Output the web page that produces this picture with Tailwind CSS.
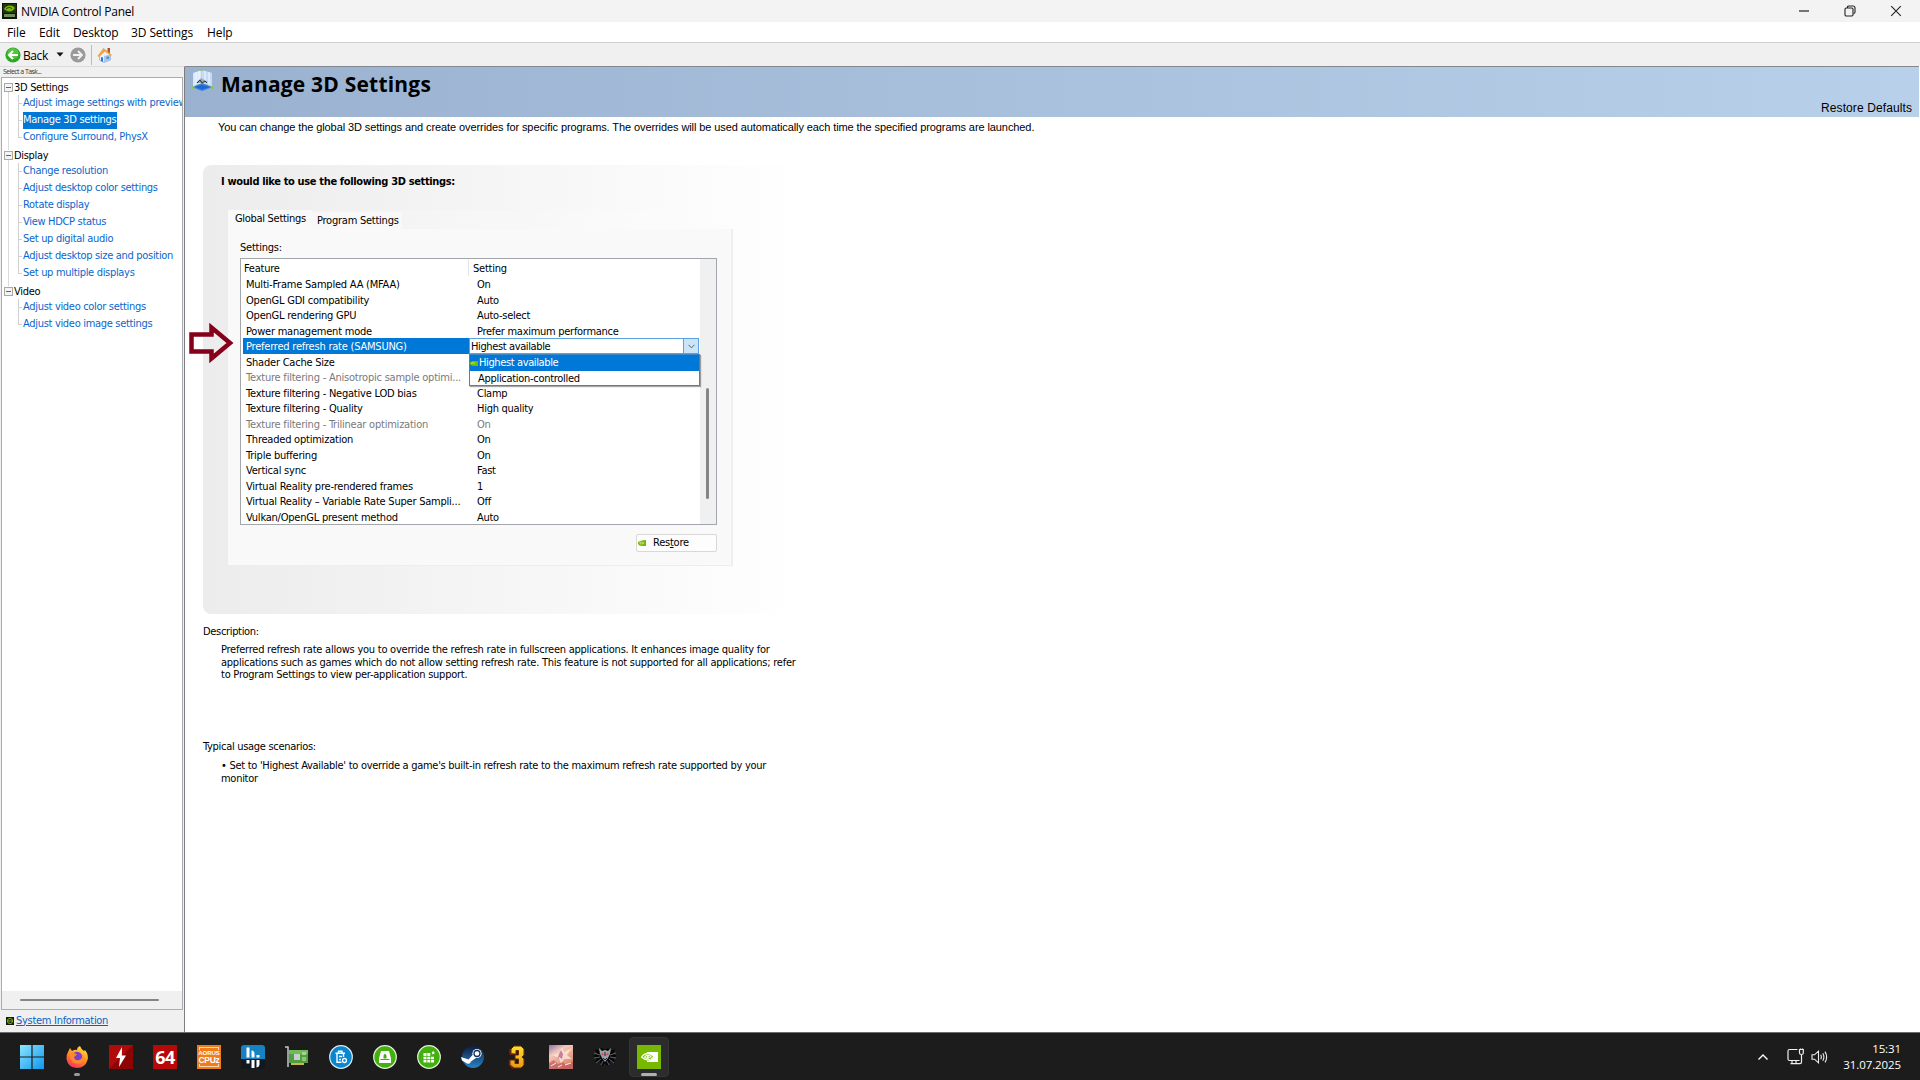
<!DOCTYPE html>
<html lang="en">
<head>
  <meta charset="UTF-8" />
  <meta name="viewport" content="width=device-width, initial-scale=1.0" />
  <title>NVIDIA Control Panel</title>
  <script src="https://cdn.jsdelivr.net/npm/@tailwindcss/browser@4"></script>
</head>
<body class="w-[1920px] h-[1080px] overflow-hidden flex flex-col bg-white text-black whitespace-nowrap font-['DejaVu_Sans_Condensed','DejaVu_Sans',sans-serif]">

  <!-- Title bar -->
  <header class="h-[22px] shrink-0 bg-[#f3f3f3] flex items-center pl-[2px] font-['Open_Sans',sans-serif] text-xs">
    <svg class="w-[15px] h-[16px]" viewBox="0 0 15 16">
      <rect width="15" height="16" fill="#10140c"/>
      <rect x="1" y="1" width="13" height="9" fill="#24330f"/>
      <path d="M2 6C4 2 10 1 13 5C10 10 5 9 2 6Z" fill="#76b900"/>
      <path d="M4 6C6 4 9 4 10 6" fill="none" stroke="#1c2b0a"/>
      <rect x="2" y="11" width="11" height="3" fill="#6f8f5a"/>
    </svg>
    <h1 class="ml-[4px] mt-[2px] tracking-[-0.25px]">NVIDIA Control Panel</h1>
    <div class="ml-auto flex items-center">
      <svg class="w-[12px] h-[12px] mr-[34px]" viewBox="0 0 12 12" fill="none" stroke="#222" stroke-width="1.2"><path d="M1 6H11"/></svg>
      <svg class="w-[12px] h-[12px] mr-[34px]" viewBox="0 0 12 12" fill="none" stroke="#222" stroke-width="1.1"><rect x="1" y="3" width="8" height="8" rx="1.2"/><path d="M3.5 3V2.2Q3.5 1 5 1H9Q11 1 11 3V7Q11 8.5 9.6 8.5"/></svg>
      <svg class="w-[12px] h-[12px] mr-[18px]" viewBox="0 0 12 12" fill="none" stroke="#222" stroke-width="1.1"><path d="M1.2 1.2L10.8 10.8M10.8 1.2L1.2 10.8"/></svg>
    </div>
  </header>

  <!-- Menu bar -->
  <nav class="h-[21px] shrink-0 bg-white border-b border-[#cfcfcf] flex items-center pl-[7px] font-['Open_Sans',sans-serif] text-xs tracking-[-0.1px] leading-5 pt-[2px]">
    <span class="w-[32px]">File</span>
    <span class="w-[34px]">Edit</span>
    <span class="w-[58px]">Desktop</span>
    <span class="w-[76px]">3D Settings</span>
    <span>Help</span>
  </nav>

  <!-- Toolbar -->
  <div class="h-[23px] shrink-0 bg-[#f0f0f0] flex items-center pl-[5px] font-['Open_Sans',sans-serif] text-xs">
    <svg class="w-[16px] h-[16px]" viewBox="0 0 16 16">
      <circle cx="8" cy="8" r="7.6" fill="#2fa828"/>
      <circle cx="8" cy="6.5" r="5.6" fill="#54c43e"/>
      <path d="M13 8H4.5M8 4L4 8L8 12" fill="none" stroke="#fff" stroke-width="2"/>
    </svg>
    <span class="ml-[2px] mt-[2px] w-[31px] tracking-[-0.4px]">Back</span>
    <svg class="ml-[2px] w-[8px] h-[5px]" viewBox="0 0 8 5"><path d="M.5 .5H7.5L4 4.5Z" fill="#111"/></svg>
    <svg class="ml-[6px] w-[16px] h-[16px]" viewBox="0 0 16 16">
      <circle cx="8" cy="8" r="7.6" fill="#9a9a9a"/>
      <path d="M3 8H11.5M8 4L12 8L8 12" fill="none" stroke="#f3f3f3" stroke-width="1.8"/>
    </svg>
    <span class="ml-[5px] w-px h-[20px] bg-[#bdbdbd]"></span>
    <svg class="ml-[5px] w-[16px] h-[16px]" viewBox="0 0 16 16">
      <path d="M2.5 8L8 3L13.5 8V13L7 15.5L2.5 13Z" fill="#e9f1fb" stroke="#7fa6d8" stroke-width=".7"/>
      <path d="M7 9L13.5 7.5V13L7 15.5Z" fill="#a9c7ec"/>
      <rect x="10.5" y="1" width="2.5" height="5" fill="#b9512a"/>
      <path d="M0.5 9L6.5 1L15 8L13.5 9L8 4.5L2 10Z" fill="#f2a33c"/>
      <path d="M4 10L6 10.5V15L4 14Z" fill="#3a72c4"/>
      <rect x="9.5" y="9.5" width="2.5" height="2.5" fill="#5a8dd6"/>
    </svg>
  </div>

  <div class="flex-1 min-h-0 flex">

    <!-- Task list -->
    <aside class="w-[185px] shrink-0 bg-[#f0f0f0] border-t border-r border-t-[#dcdcdc] border-r-[#7d7d7d] flex flex-col pl-px">
      <p class="h-[10px] shrink-0 pl-[2px] text-[7px] leading-[10px] text-[#333] font-['Open_Sans',sans-serif] tracking-[-0.55px]">Select a Task...</p>
      <div class="h-[933px] shrink-0 w-[182px] bg-white border border-[#a9adb3] flex flex-col overflow-hidden text-[11px] leading-[17px] tracking-[-0.31px]">
        <ul id="taskTree" class="flex-1"></ul>
        <div class="h-[18px] bg-[#f0f0f0] flex items-center pl-[18px]"><span class="w-[139px] h-[2px] rounded bg-[#858585]"></span></div>
      </div>
      <a class="flex items-center h-[20px] shrink-0 mt-px pl-[5px] text-[11px] tracking-[-0.29px] text-[#0a5fc4]">
        <svg class="w-[8px] h-[8px] mr-[2px]" viewBox="0 0 8 8"><rect width="8" height="8" fill="#15200c"/><circle cx="4" cy="4" r="2.6" fill="none" stroke="#76b900"/><path d="M3 3V5M5 3V5" stroke="#a5d65a" stroke-width=".8"/></svg>
        <span class="underline">System Information</span>
      </a>
    </aside>

    <!-- Page -->
    <main class="flex-1 bg-white text-[11px] tracking-[-0.24px]">
      <div class="h-[51px] mr-px border-t border-[#82888e] bg-linear-to-r from-[#9ab2d0] to-[#b9d0ea] flex justify-between">
        <div class="flex items-start pl-[6px] pt-[2px]">
          <svg class="w-[23px] h-[24px]" viewBox="0 0 23 24">
            <path d="M2 4L11 1V15L2 18Z" fill="#d9e8fa"/>
            <path d="M11 1L21 4V18L11 15Z" fill="#c5daf5"/>
            <path d="M5 3V17M8 2V16M14 2V16M18 3V17" stroke="#f4f9ff"/>
            <path d="M1 18L11 14L22 18L11 22Z" fill="#3b82e0"/>
            <path d="M4 18L11 16L19 18L11 20.5Z" fill="#1f66cf"/>
            <path d="M10.5 1V12M10.5 12L2 18M10.5 12L21 18" stroke="#a9d977" stroke-width=".6" fill="none"/>
            <path d="M5 14L10 9L17 13L12 14Z" fill="#9aa6b2"/>
            <path d="M6 14L9 11L11 14L14 12L16 14" stroke="#2e3338" fill="none"/>
            <path d="M9 2L10.5 0L12 2ZM1 17L1 20L4 19ZM22 17V20L19 19Z" fill="#8cc63f"/>
          </svg>
          <h2 class="ml-[7px] mt-[1px] text-[21px] leading-[28px] font-bold tracking-[0.2px] font-['Open_Sans',sans-serif]">Manage 3D Settings</h2>
        </div>
        <span class="self-end mr-[7px] mb-[1px] text-xs tracking-[0.1px] font-['Liberation_Sans',sans-serif]">Restore Defaults</span>
      </div>

      <p class="pl-[33px] mt-[2px] h-[16px] leading-[16px] tracking-[-0.09px] font-['Liberation_Sans',sans-serif]">You can change the global 3D settings and create overrides for specific programs. The overrides will be used automatically each time the specified programs are launched.</p>

      <section class="ml-[18px] mt-[30px] w-[600px] h-[449px] rounded-lg bg-linear-to-r from-[#ececec] to-white">
        <h3 class="pl-[18px] pt-[9px] h-[45px] leading-[16px] font-bold tracking-[-0.35px]">I would like to use the following 3D settings:</h3>
        <div class="ml-[25px] w-[505px]">
          <div class="h-[19px] flex items-end bg-white/20">
            <span class="w-[84px] h-[19px] pl-[7px] leading-[18px] tracking-[-0.3px] bg-[#f9f9f9]">Global Settings</span>
            <span class="w-[90px] h-[17px] pl-[5px] leading-[18px] bg-white/40">Program Settings</span>
          </div>
          <div class="h-[337px] bg-[#f9f9f9] border-r-2 border-b border-[#eeeeee] pl-[12px] pt-[9px]">
            <p class="leading-[19px] h-[20px]">Settings:</p>

            <!-- Feature table -->
            <div class="relative w-[477px] h-[267px] bg-white border border-[#a3a7ac] flex">
              <div class="flex-1 min-w-0 overflow-hidden">
                <div class="flex h-[17px] leading-[19px]">
                  <span class="w-[228px] pl-[3px] border-r border-[#e5e5e5]">Feature</span>
                  <span class="pl-[4px]">Setting</span>
                </div>
                <div id="featureRows" class="leading-[17px]"></div>
              </div>
              <div class="w-[16px] bg-[#f0f0f0]">
                <div class="ml-[6px] mt-[129px] w-[3px] h-[111px] rounded bg-[#858585]"></div>
              </div>

              <!-- Open drop-down -->
              <div class="absolute left-[228px] top-[79px] w-[231px]">
                <div class="h-[16px] w-[230px] bg-white border border-[#5ba3e0] flex">
                  <span class="flex-1 pl-[1px] leading-[15px] tracking-[-0.38px]">Highest available</span>
                  <span class="w-[15px] border-l border-[#5ba3e0] bg-[#cce4f7] flex items-center justify-center">
                    <svg class="w-[7px] h-[5px]" viewBox="0 0 7 5"><path d="M.5 .8L3.5 3.8L6.5 .8" fill="none" stroke="#555" stroke-width=".9"/></svg>
                  </span>
                </div>
                <div class="h-[32px] bg-white border border-[#3f87c4] shadow-[1px_1px_1px_rgba(0,0,0,0.35)]">
                  <div class="h-[16px] bg-[#0078d7] text-white flex items-center leading-[16px] tracking-[-0.38px]">
                    <svg class="w-[8px] h-[5px] mr-px" viewBox="0 0 8 5"><path d="M0 1Q4 -1 8 0V5H3Q1 5 0 3Z" fill="#76b900"/><path d="M1 2.5Q3 1 5 2.5" fill="none" stroke="#d9efb0" stroke-width=".8"/></svg>
                    <span>Highest available</span>
                  </div>
                  <div class="h-[14px] pl-[8px] leading-[16px] tracking-[-0.3px]">Application-controlled</div>
                </div>
              </div>
            </div>

            <button class="block ml-[396px] mt-[9px] w-[81px] h-[18px] bg-[#fdfdfd] border border-[#d8d8d8] rounded-xs">
              <span class="flex items-center pl-[1px] leading-[16px]">
                <svg class="w-[8px] h-[6px] mr-[7px]" viewBox="0 0 8 6"><path d="M0 2Q3 0 8 0V6H4Q1 6 0 4Z" fill="#76b900"/><path d="M1 3Q3 1 6 3Q4 5 2 3.5" fill="none" stroke="#d9efb0" stroke-width=".7"/></svg>
                <span>Res<u>t</u>ore</span>
              </span>
            </button>
          </div>
        </div>
      </section>

      <section class="ml-[18px] mt-[10px]">
        <h4 class="leading-[16px] tracking-[-0.33px]">Description:</h4>
        <p class="ml-[18px] mt-[4px] h-[91px] leading-[12.5px] tracking-[-0.24px]">Preferred refresh rate allows you to override the refresh rate in fullscreen applications. It enhances image quality for<br>applications such as games which do not allow setting refresh rate. This feature is not supported for all applications; refer<br>to Program Settings to view per-application support.</p>
        <h4 class="mt-[4px] leading-[16px] tracking-[-0.3px]">Typical usage scenarios:</h4>
        <p class="ml-[18px] mt-[5px] leading-[12.5px] tracking-[-0.28px]">• Set to 'Highest Available' to override a game's built-in refresh rate to the maximum refresh rate supported by your<br>monitor</p>
      </section>
    </main>
  </div>

  <!-- Callout arrow over the selected row -->
  <svg class="absolute left-[188px] top-[322px] w-[46px] h-[42px]" viewBox="0 0 46 42"><path d="M3.5 12.5H23.5V5.5L42 21L23.5 36.5V29.5H3.5Z" fill="none" stroke="#850018" stroke-width="4.5"/></svg>

  <!-- Taskbar -->
  <footer class="h-[48px] shrink-0 bg-[#1c1c1c] border-t border-[#6c6c6c] flex items-center pl-[11px] text-white font-['Open_Sans',sans-serif]">
    <span class="w-[44px] flex justify-center pr-[2px]"><svg class="w-[24px] h-[24px]" viewBox="0 0 24 24"><defs><linearGradient id="win" x2="1" y2="1"><stop stop-color="#8be6ff"/><stop offset="1" stop-color="#0f96ee"/></linearGradient></defs><path d="M0 0H11.4V11.4H0ZM12.6 0H24V11.4H12.6ZM0 12.6H11.4V24H0ZM12.6 12.6H24V24H12.6Z" fill="url(#win)"/></svg></span>
    <span class="relative w-[44px] flex justify-center"><svg class="w-[24px] h-[24px]" viewBox="0 0 24 24">
      <defs><linearGradient id="fox" x1=".8" x2=".3" y2="1"><stop stop-color="#ffe14a"/><stop offset=".45" stop-color="#ff9a1f"/><stop offset="1" stop-color="#ff2d5e"/></linearGradient></defs>
      <path d="M3 7L5 3L7 6Q10 4 12 5Q12 2 15 1Q16 4 19 6L20 5Q24 10 22.5 15Q20 23 12 23Q3 22.5 1.5 14Q1 10 3 7Z" fill="url(#fox)"/>
      <circle cx="12" cy="12" r="5.2" fill="#7b3fd0"/>
      <path d="M5 8Q9 7 12 9.5L9 12Q10 16 14 15Q18 14 17 9Q21 14 16 18Q8 20 5.5 14Z" fill="#ff8a2a"/>
    </svg><i class="absolute top-[28px] w-[6px] h-[3px] rounded bg-[#9a9a9a]"></i></span>
    <span class="w-[44px] flex justify-center"><svg class="w-[24px] h-[24px]" viewBox="0 0 24 24"><rect width="24" height="24" fill="#b00a0a"/><path d="M0 24L24 0V24Z" fill="#8c0404"/><path d="M13 2L7 13H11L10 22L17 10.5H12.8Z" fill="#fff"/></svg></span>
    <span class="w-[44px] flex justify-center"><span class="w-[24px] h-[24px] bg-[#b80808] text-[18px] leading-[24px] font-bold text-center tracking-[-0.5px]">64</span></span>
    <span class="w-[44px] flex justify-center"><span class="relative w-[24px] h-[24px] bg-[#ee7d1c] flex flex-col items-center justify-center font-bold font-['Liberation_Sans',sans-serif]">
      <span class="absolute inset-[2px] border border-[#ffd9b0]"></span>
      <span class="relative bg-[#ee7d1c] w-[24px] text-center text-[6px] leading-[6px]">AORUS</span>
      <span class="relative bg-[#ee7d1c] w-[24px] text-center text-[8.5px] leading-[8px] tracking-[-0.3px]">CPUz</span>
    </span></span>
    <span class="w-[44px] flex justify-center"><svg class="w-[24px] h-[24px]" viewBox="0 0 24 24"><rect width="24" height="24" rx="3" fill="#101820"/><path d="M0 14V3Q0 0 3 0H21Q24 0 24 3V14Z" fill="#1583c3"/><path d="M5.5 2.5H8.5V12.5H5.5ZM10.5 5.5Q13.5 5.5 13.5 9V12.5H10.5ZM15.5 10H18.500V12.5H15.5ZM5.5 15H8.5V18.5H5.5ZM10.5 15H13.5V23H10.5ZM15.5 15H18.5V19Q18.5 22 15.5 22.5Z" fill="#fff"/></svg></span>
    <span class="w-[44px] flex justify-center"><svg class="w-[24px] h-[24px]" viewBox="0 0 24 24"><path d="M0 2H3V22" fill="none" stroke="#c4c8cc" stroke-width="1.5"/><rect x="4" y="5" width="19" height="13" fill="#4e9f3d"/><path d="M4 5H23V9H4Z" fill="#6fbb58"/><rect x="9" y="9" width="6" height="6" fill="#c9cdd0"/><rect x="17" y="7" width="4" height="3" fill="#a6d490"/><rect x="17" y="12" width="4" height="4" fill="#8dc67b"/><path d="M6 18H19V20H6Z" fill="#d2b34c"/></svg></span>
    <span class="w-[44px] flex justify-center"><svg class="w-[24px] h-[24px]" viewBox="0 0 24 24"><circle cx="12" cy="12" r="11.3" fill="#0a86cf" stroke="#dceefa" stroke-width="1.2"/><path d="M6.5 8.3H16M9.5 8V6.2H13V8M8 9V17.3H12.5M14.5 9V12" fill="none" stroke="#fff" stroke-width="1.4"/><path d="M10 11.5H13M10 14.5H12" stroke="#fff" stroke-width="1.3"/><circle cx="15.5" cy="15.5" r="2" fill="none" stroke="#fff" stroke-width="1.3"/></svg></span>
    <span class="w-[44px] flex justify-center"><svg class="w-[24px] h-[24px]" viewBox="0 0 24 24"><circle cx="12" cy="12" r="11.3" fill="#43b010" stroke="#e2f5d8" stroke-width="1.2"/><path d="M8 6H16L18 13.5V18H6V13.5Z" fill="#fff"/><path d="M10.5 13.5V11Q10.500 9 12 9Q13.5 9 13.5 11V13.5Z" fill="#43b010"/><path d="M7.5 14.5H16.5" stroke="#43b010"/></svg></span>
    <span class="w-[44px] flex justify-center"><svg class="w-[24px] h-[24px]" viewBox="0 0 24 24"><circle cx="12" cy="12" r="11.3" fill="#43b010" stroke="#e2f5d8" stroke-width="1.2"/><path d="M6.5 8H9.5V11H6.5ZM10.3 8H13.3V11H10.3ZM6.5 11.7H9.5V14.3H6.5ZM10.3 11.7H13.3V14.3H10.3ZM14 11.7H17V14.3H14ZM6.5 15H9.5V17.5H6.5ZM10.3 15H13.3V17.5H10.3ZM14 15H17V17.5H14ZM14.8 7L17 6.2L17.6 8.5L15.5 9.5Z" fill="#fff"/></svg></span>
    <span class="w-[44px] flex justify-center"><svg class="w-[24px] h-[24px]" viewBox="0 0 24 24"><defs><linearGradient id="stm" x2="0" y2="1"><stop stop-color="#0d1c44"/><stop offset="1" stop-color="#2a83c4"/></linearGradient></defs><circle cx="12" cy="12" r="11" fill="url(#stm)"/><path d="M0 12L7.5 14.5L12 9.5L15 13L10 16.5Q9 19.5 6 18.5L1 15.5Z" fill="#fff"/><circle cx="16" cy="8.5" r="4.6" fill="#fff"/><circle cx="16" cy="8.5" r="3" fill="none" stroke="#16305f" stroke-width="1.3"/></svg></span>
    <span class="w-[44px] flex justify-center"><svg class="w-[18px] h-[24px]" viewBox="0 0 18 24"><defs><linearGradient id="gold" x2="0" y2="1"><stop stop-color="#ffe02e"/><stop offset="1" stop-color="#e59a12"/></linearGradient></defs><path d="M3 4L6 1H13L16 4V10L14 12L16 14V20L13 23H6L2 20V15H7V18.5H10.5V14H7V10H10.5V5.5H8V9H3Z" fill="url(#gold)" stroke="#6b2408"/><path d="M2 4V9H6M1.5 15V20L5 23.5" stroke="#8a2408" fill="none" stroke-width="1.2"/></svg></span>
    <span class="w-[44px] flex justify-center"><svg class="w-[24px] h-[24px]" viewBox="0 0 24 24"><defs><linearGradient id="sky" x1="0" x2=".6" y2="1"><stop stop-color="#8d6fb0"/><stop offset=".35" stop-color="#f3c9b8"/><stop offset="1" stop-color="#dd8468"/></linearGradient></defs><rect width="24" height="24" fill="url(#sky)"/><path d="M13 2L15 7L23 3L18 10L23 14L15 14L12 19L10 13L3 10L10 8Z" fill="#fdebe2" opacity=".75"/><path d="M12 5L14 9L13 14L10 12L8 15L10 9Z" fill="#b8698c" opacity=".8"/><path d="M0 18L5 15L9 19L14 17L17 20L24 16V24H0Z" fill="#b8505a" opacity=".6"/><path d="M2 21L7 18M9 22L13 20M16 20L22 18" stroke="#ffe9dc"/></svg></span>
    <span class="w-[44px] flex justify-center"><svg class="w-[24px] h-[24px]" viewBox="0 0 24 24"><path d="M2 4L7 6L9 3L12 5L15 3L17 6L22 4L20 9L24 11L20 13L22 17L17 16L15 21L12 18L9 21L7 16L2 17L4 13L0 11L4 9Z" fill="#050507"/><path d="M6 3L9 6L12 5L15 6L18 3L17 9L15 13L12 17L9 13L7 9Z" fill="#9aa0a8"/><path d="M1 8L7 10M23 8L17 10M1 13L7 12M23 13L17 12M3 18L8 14M21 18L16 14M8 20L10 16M16 20L14 16" stroke="#5c626b"/><path d="M8.5 8.5L10.5 10M15.5 8.5L13.5 10" stroke="#e23b4a" stroke-width="1.5"/><path d="M12 7V11M10 13L12 15L14 13" stroke="#222" fill="none"/></svg></span>
    <span class="relative w-[40px] h-[40px] ml-[2px] rounded bg-[#2c2c2c] border border-[#343434] flex items-center justify-center">
      <svg class="w-[24px] h-[24px]" viewBox="0 0 24 24"><rect width="24" height="24" fill="#76b900"/><path d="M10 7H21V17H10Z" fill="#fff"/><path d="M4 12Q9 5 17 11.5Q11 19 4 12Z" fill="#76b900"/><path d="M4.5 12Q10 5 17 11.5Q11 18 4.5 12ZM7.5 12Q10.5 8.5 14 11.5Q11 15 7.5 12Z" fill="none" stroke="#fff" stroke-width="1.1"/><circle cx="10.8" cy="11.9" r="1.1" fill="#fff"/></svg>
      <i class="absolute top-[35px] w-[16px] h-[3px] rounded bg-[#b0b0b0]"></i>
    </span>

    <div class="ml-auto flex items-center">
      <svg class="w-[12px] h-[8px] mr-[18px]" viewBox="0 0 12 8"><path d="M1.5 6.5L6 2L10.5 6.5" fill="none" stroke="#fff" stroke-width="1.4"/></svg>
      <svg class="w-[17px] h-[17px] mr-[7px]" viewBox="0 0 17 17" fill="none" stroke="#eee" stroke-width="1.2"><path d="M10.5 1.5H2.5Q1 1.5 1 3V11Q1 12.5 2.5 12.5H12.5M5 12.5V15.5M9 12.5V15.5M3.5 15.6H13Q14.5 15.6 14.5 14V6.5M12.5 1.5H16.3V5Q16.3 6.5 14.5 6.5Q12.5 6.5 12.5 5ZM13.5 .5V1.5M15.5 .5V1.5"/></svg>
      <svg class="w-[17px] h-[14px] mr-[15px]" viewBox="0 0 17 14" fill="none" stroke="#eee" stroke-width="1.1"><path d="M1 4.8H3.5L7.5 1.2V12.8L3.5 9.2H1ZM9.7 4.8Q11 7 9.7 9.2M11.8 3.2Q14 7 11.8 10.8M14 1.6Q17.3 7 14 12.4"/></svg>
      <div class="mr-[19px] text-right text-[11.5px] leading-[16px] tracking-[-0.1px]">15:31<br>31.07.2025</div>
    </div>
  </footer>

  <script>
    const tasks = [
      { group: "3D Settings", items: ["Adjust image settings with preview", "Manage 3D settings", "Configure Surround, PhysX"] },
      { group: "Display", items: ["Change resolution", "Adjust desktop color settings", "Rotate display", "View HDCP status", "Set up digital audio", "Adjust desktop size and position", "Set up multiple displays"] },
      { group: "Video", items: ["Adjust video color settings", "Adjust video image settings"] }
    ];
    const features = [
      ["Multi-Frame Sampled AA (MFAA)", "On"],
      ["OpenGL GDI compatibility", "Auto"],
      ["OpenGL rendering GPU", "Auto-select"],
      ["Power management mode", "Prefer maximum performance"],
      ["Preferred refresh rate (SAMSUNG)", ""],
      ["Shader Cache Size", ""],
      ["Texture filtering - Anisotropic sample optimi...", ""],
      ["Texture filtering - Negative LOD bias", "Clamp"],
      ["Texture filtering - Quality", "High quality"],
      ["Texture filtering - Trilinear optimization", "On"],
      ["Threaded optimization", "On"],
      ["Triple buffering", "On"],
      ["Vertical sync", "Fast"],
      ["Virtual Reality pre-rendered frames", "1"],
      ["Virtual Reality – Variable Rate Super Sampli...", "Off"],
      ["Vulkan/OpenGL present method", "Auto"]
    ];
    const selectedTask = "Manage 3D settings";
    const selectedFeature = 4;
    const disabled = [6, 9];

    document.getElementById("taskTree").innerHTML = tasks.map((t, n) => `
      <li class="relative">
        <div class="relative z-10 h-[17px] flex items-center pl-[2px] pt-[1px]">
          <span class="w-[9px] h-[9px] mr-[1px] border border-[#a8a8a8] bg-[#f4f4f4] flex items-center justify-center"><i class="w-[5px] h-px bg-[#4a63a8]"></i></span>
          <span>${t.group}</span>
        </div>
        ${n < tasks.length - 1 ? '<i class="absolute left-[6px] top-[14px] bottom-[-4px] w-px bg-[#dadada]"></i>' : ""}
        <ul class="relative pl-[21px]">
          <i class="absolute left-[16px] top-0 bottom-[8px] w-px bg-[#d0d0d0]"></i>
          ${t.items.map(i => `
          <li class="relative h-[17px] flex">
            <i class="absolute left-[-5px] top-[8px] w-[4px] h-px bg-[#d0d0d0]"></i>
            <span class="${i === selectedTask ? "h-[17px] bg-[#0078d7] text-white pr-[1px] leading-[15px]" : "text-[#0a66cc] leading-[15px]"}">${i}</span>
          </li>`).join("")}
        </ul>
      </li>`).join("");

    document.getElementById("featureRows").innerHTML = features.map(([name, value], i) => `
      <div class="h-[15.53px] flex ${disabled.includes(i) ? "text-[#7a7a7a]" : ""}">
        <span class="w-[226px] ml-[2px] pl-[3px] tracking-[-0.22px] ${i === selectedFeature ? "bg-[#0078d7] text-white" : ""}">${name}</span>
        <span class="pl-[8px] tracking-[-0.28px]">${value}</span>
      </div>`).join("");
  </script>
</body>
</html>
